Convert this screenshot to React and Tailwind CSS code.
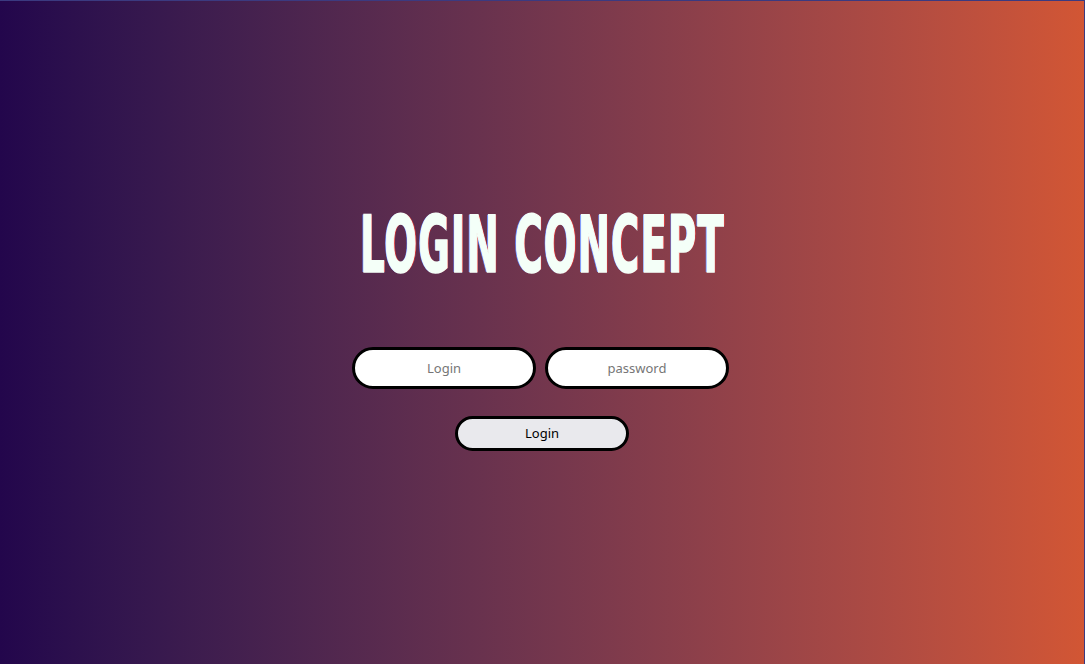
export default function App() {
  return (
    <div className="w-full h-[664px] border-t border-r border-[#3b3a80] bg-gradient-to-r from-[#23064c] to-[#d25634] flex flex-col items-center pt-[196px]">
      <h1 className="font-['DejaVu_Sans_Condensed','Liberation_Sans',sans-serif] text-[#f4fff8] text-[78px] leading-[96px] font-bold tracking-[2px] scale-x-[0.55] whitespace-nowrap [-webkit-text-stroke:1.5px_#f4fff8] [text-shadow:2px_0_0_#e03a3a,-2px_0_0_#6a8cff]">
        LOGIN CONCEPT
      </h1>
      <form className="flex flex-col items-center mt-[54px] font-['Noto_Sans',sans-serif]">
        <div className="flex gap-[9px] -ml-[3px]">
          <input
            placeholder="Login"
            className="w-[184px] h-[42px] rounded-full border-[3px] border-black bg-white text-center text-[13px] placeholder:text-[#767676] outline-none"
          />
          <input
            type="password"
            placeholder="password"
            className="w-[184px] h-[42px] rounded-full border-[3px] border-black bg-white text-center text-[13px] placeholder:text-[#767676] outline-none"
          />
        </div>
        <button
          type="button"
          className="mt-[27px] w-[174px] h-[35px] rounded-full border-[3px] border-black bg-[#e9e9ed] text-[13px] text-black"
        >
          Login
        </button>
      </form>
    </div>
  );
}
